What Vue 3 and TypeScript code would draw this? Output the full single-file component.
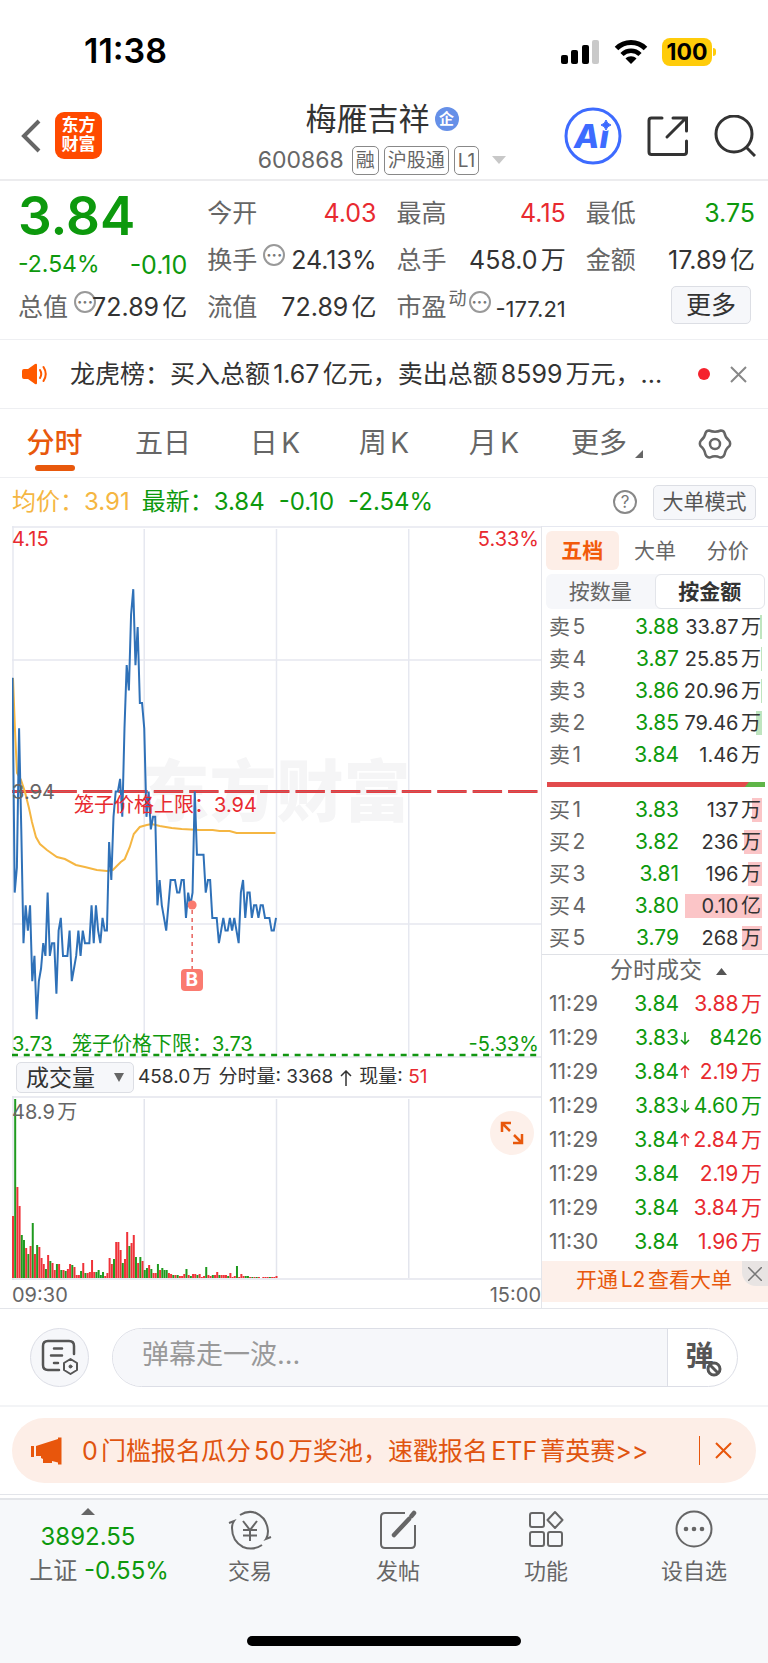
<script setup lang="ts">
import { ref } from 'vue'

interface DepthRow { label: string; price: string; amount: string; bar: number }
interface Trade { time: string; price: string; move: '' | 'up' | 'down'; amount: string; side: 'red' | 'green' }

const periods = ['分时', '五日', '日K', '周K', '月K']
const activePeriod = ref('分时')
const bookTabs = ['五档', '大单', '分价']
const activeBook = ref('五档')
const units = ['按数量', '按金额']
const activeUnit = ref('按金额')
const indicator = ref('成交量')
const message = ref('')

const sells: DepthRow[] = [
  { label: '卖5', price: '3.88', amount: '33.87万', bar: 2 },
  { label: '卖4', price: '3.87', amount: '25.85万', bar: 1 },
  { label: '卖3', price: '3.86', amount: '20.96万', bar: 1 },
  { label: '卖2', price: '3.85', amount: '79.46万', bar: 6 },
  { label: '卖1', price: '3.84', amount: '1.46万', bar: 0 },
]
const buys: DepthRow[] = [
  { label: '买1', price: '3.83', amount: '137万', bar: 10 },
  { label: '买2', price: '3.82', amount: '236万', bar: 18 },
  { label: '买3', price: '3.81', amount: '196万', bar: 14 },
  { label: '买4', price: '3.80', amount: '0.10亿', bar: 77 },
  { label: '买5', price: '3.79', amount: '268万', bar: 20 },
]
const trades: Trade[] = [
  { time: '11:29', price: '3.84', move: '', amount: '3.88万', side: 'red' },
  { time: '11:29', price: '3.83', move: 'down', amount: '8426', side: 'green' },
  { time: '11:29', price: '3.84', move: 'up', amount: '2.19万', side: 'red' },
  { time: '11:29', price: '3.83', move: 'down', amount: '4.60万', side: 'green' },
  { time: '11:29', price: '3.84', move: 'up', amount: '2.84万', side: 'red' },
  { time: '11:29', price: '3.84', move: '', amount: '2.19万', side: 'red' },
  { time: '11:29', price: '3.84', move: '', amount: '3.84万', side: 'red' },
  { time: '11:30', price: '3.84', move: '', amount: '1.96万', side: 'red' },
]

// One price per minute from 09:30 to 11:30, in cents.
const prices: number[] = [
  403, 386, 388, 399, 391, 382, 385, 383, 385, 379, 381, 376, 379, 380, 382, 381, 386, 381, 382, 382,
  378, 383, 384, 381, 381, 381, 383, 379, 380, 381, 383, 381, 383, 382, 382, 382, 385, 382, 385, 383,
  382, 384, 383, 383, 390, 387, 392, 394, 394, 395, 392, 399, 404, 402, 408, 410, 404, 407, 401, 401,
  399, 392, 394, 391, 392, 392, 385, 387, 385, 384, 383, 385, 387, 387, 387, 386, 386, 387, 387, 384,
  386, 385, 386, 394, 389, 389, 389, 389, 386, 387, 387, 384, 384, 384, 382, 383, 384, 383, 383, 384,
  383, 384, 383, 382, 386, 387, 384, 386, 386, 384, 385, 385, 384, 385, 385, 384, 384, 384, 383, 383,
  384,
]
const minuteStep = 264 / 120
const priceLine = prices
  .map((p, i) => `${(i * minuteStep + 0.5).toFixed(1)},${(265.5 - ((p - 394) * 265.5) / 21).toFixed(1)}`)
  .join(' ')
const averageLine =
  '1,152 3,204 5,247 9,254 13,266 17,282 20,296 24,311 28,318 35,324 45,331 53,333 64,339 73,341 85,344 95,345 101,344 109,336 113,333 118,321 122,308 128,301 135,299 140,298 148,300 160,302 170,303 188,304 201,304 208,305 218,305 225,307 264,307'

const volumes: number[] = [
  62, 179, 91, 72, 43, 38, 30, 24, 32, 55, 24, 33, 31, 20, 14, 9, 23, 17, 15, 8,
  14, 14, 8, 8, 7, 9, 14, 13, 11, 3, 3, 7, 15, 5, 5, 6, 18, 6, 6, 8,
  3, 6, 2, 5, 20, 14, 19, 36, 36, 28, 15, 19, 46, 32, 35, 43, 21, 15, 21, 17,
  8, 10, 13, 9, 5, 5, 14, 8, 10, 8, 8, 5, 4, 3, 3, 3, 2, 2, 4, 9,
  3, 2, 4, 4, 3, 4, 1, 2, 11, 3, 2, 3, 3, 6, 3, 3, 3, 3, 2, 5,
  1, 2, 12, 1, 4, 2, 2, 2, 1, 1, 1, 1, 1, 0, 1, 1, 1, 1, 1, 1, 2,
]
const volumeSides =
  'rgrrggrgrgrgrrrgrgrrgrgrgrrgrrrgrgrrrrggggrrrrgrrrgrrgrrgrgrggrgrrgrgggrrgrgrrrgrgrrgrrrgrrgrrgrrrgrrrgrrrggrgrgrrrrrgrrr'
const volumeBars = volumes.map((h, i) => ({
  x: i * minuteStep,
  h,
  rise: volumeSides.charAt(i) !== 'g',
}))
</script>

<template>
  <div class="page">
    <header>
      <div class="status">
        <time>11:38</time>
        <div class="status-icons">
          <svg width="40" height="26" viewBox="0 0 40 26" aria-hidden="true">
            <rect x="1" y="16" width="7" height="9" rx="2" />
            <rect x="11" y="11" width="7" height="14" rx="2" />
            <rect x="22" y="6" width="7" height="19" rx="2" />
            <rect x="32" y="1" width="7" height="24" rx="2" fill="#c9c9c9" />
          </svg>
          <svg width="34" height="26" viewBox="0 0 34 26" fill="none" stroke="#000" stroke-width="5" aria-hidden="true">
            <path d="M2.500 9.500C10.500 1.500 23.500 1.500 31.500 9.500" />
            <path d="M8 15.500C13 10.500 21 10.500 26 15.500" stroke-width="4.500" />
            <path d="M11.500 19.500C14.500 16.500 19.500 16.500 22.500 19.500L17 25Z" fill="#000" stroke="none" />
          </svg>
          <span class="battery">100</span>
        </div>
      </div>
      <div class="title-bar">
        <div class="title-left">
          <button class="plain" aria-label="返回">
            <svg width="22" height="36" viewBox="0 0 22 36" fill="none" stroke="#666" stroke-width="4"><path d="M19 3L4 18L19 33" /></svg>
          </button>
          <a class="logo" href="#">东方<br />财富</a>
        </div>
        <div class="title-mid">
          <h1>梅雁吉祥<span class="ent">企</span></h1>
          <div class="code"><span>600868</span><i>融</i><i>沪股通</i><i>L1</i>
            <svg width="14" height="8" viewBox="0 0 14 8" fill="#c8c8c8"><path d="M0 0H14L7 8Z" /></svg>
          </div>
        </div>
        <div class="title-right">
          <button class="plain" aria-label="Ai">
            <svg width="58" height="58" viewBox="0 0 58 58">
              <circle cx="29" cy="29" r="27" fill="#fff" stroke="#3d6bff" stroke-width="3" />
              <text x="10" y="41" class="ai">Ai</text>
              <circle cx="42" cy="18" r="6" fill="#fff" />
              <path d="M42 13Q43 17 47 18Q43 19 42 23Q41 19 37 18Q41 17 42 13Z" fill="#3d6bff" stroke="#3d6bff" />
            </svg>
          </button>
          <button class="plain" aria-label="分享">
            <svg width="42" height="42" viewBox="0 0 42 42" fill="none" stroke="#333" stroke-width="3" stroke-linecap="round">
              <path d="M15 3H4.500Q2 3 2 5.500V37Q2 39.500 4.500 39.500H37Q39.500 39.500 39.500 37V26M20 22L38.500 3.500M26 3H39.500V16" />
            </svg>
          </button>
          <button class="plain" aria-label="搜索">
            <svg width="42" height="42" viewBox="0 0 42 42" fill="none" stroke="#333" stroke-width="3">
              <circle cx="20" cy="19" r="18" /><path d="M32 32L41 41" />
            </svg>
          </button>
        </div>
      </div>
    </header>

    <section class="quote">
      <strong class="last green">3.84</strong>
      <div class="cell"><label>今开</label><b class="red">4.03</b></div>
      <div class="cell"><label>最高</label><b class="red">4.15</b></div>
      <div class="cell"><label>最低</label><b class="green">3.75</b></div>
      <div class="cell change green"><span>-2.54%</span><b>-0.10</b></div>
      <div class="cell"><label>换手<span class="dots">···</span></label><b>24.13%</b></div>
      <div class="cell"><label>总手</label><b>458.0万</b></div>
      <div class="cell"><label>金额</label><b>17.89亿</b></div>
      <div class="cell"><label>总值<span class="dots">···</span></label><b>72.89亿</b></div>
      <div class="cell"><label>流值</label><b>72.89亿</b></div>
      <div class="cell"><label>市盈<sup>动</sup><span class="dots tight">···</span></label><b class="small">-177.21</b></div>
      <div class="cell end"><button class="box more">更多</button></div>
    </section>

    <section class="notice">
      <svg width="26" height="22" viewBox="0 0 26 22" fill="#ff5a00" aria-hidden="true">
        <path d="M2 6H6L13 1Q15 0 15 2V20Q15 22 13 21L6 16H2Q0 16 0 14V8Q0 6 2 6Z" />
        <path d="M18 7Q20.500 11 18 15M21.500 4Q26 11 21.500 18" fill="none" stroke="#ff5a00" stroke-width="2" stroke-linecap="round" />
      </svg>
      <p>龙虎榜：买入总额1.67亿元，卖出总额8599万元，...</p>
      <span class="dot"></span>
      <button class="plain" aria-label="关闭">
        <svg width="17" height="17" viewBox="0 0 17 17" stroke="#888" stroke-width="2"><path d="M1 1L16 16M16 1L1 16" /></svg>
      </button>
    </section>

    <nav class="periods">
      <button v-for="p in periods" :key="p" class="plain" :class="{ on: p === activePeriod }" @click="activePeriod = p">{{ p }}</button>
      <button class="plain">更多<svg class="corner" width="8" height="8" viewBox="0 0 8 8" fill="#666"><path d="M8 0V8H0Z" /></svg></button>
      <button class="plain" aria-label="设置">
        <svg width="34" height="34" viewBox="0 0 34 34" fill="none" stroke="#666" stroke-width="2.500" stroke-linejoin="round">
          <path d="M11 3.500Q17 6 23 3.500Q25.500 3.500 26.500 6Q27 10 31 13.500Q33 16 31.500 19Q27.500 22 26.500 27.500Q25 31 22 30.500Q17 28 12 30.500Q9 31 7.500 27.500Q6.500 22 2.500 19Q1 16 3 13.500Q7 10 7.500 6Q8.500 3.500 11 3.500Z" />
          <circle cx="17" cy="17" r="5" />
        </svg>
      </button>
    </nav>

    <div class="summary">
      <span class="yellow">均价：3.91</span>
      <span class="green figures"><span>最新：3.84</span><span>-0.10</span><span>-2.54%</span></span>
      <button class="plain help" aria-label="帮助">?</button>
      <button class="box mode">大单模式</button>
    </div>

    <main>
      <div class="charts">
        <div class="price-chart">
          <div class="watermark">东方财富</div>
          <svg class="plot" viewBox="0 0 530 532" preserveAspectRatio="none" fill="none">
            <g stroke="#e6e8f0" stroke-width="1.500">
              <path d="M0 1H530M0 134H530M0 398H530M0 531H530M1 0V532M132.500 3V530M265 3V530M397.500 3V530" />
            </g>
            <path d="M0 265.500H528" stroke="#e83a3f" stroke-width="3" stroke-dasharray="29.500 6" />
            <path d="M0 265.500H528" stroke="#888" stroke-width="1" stroke-dasharray="29.500 6" opacity="0.4" />
            <path d="M0 529H528" stroke="#119611" stroke-width="2.500" stroke-dasharray="6 5.800" />
            <polyline :points="averageLine" stroke="#f5b642" stroke-width="2" />
            <polyline :points="priceLine" stroke="#2f71b8" stroke-width="2" />
            <path d="M180.500 384V443" stroke="#e8625d" stroke-width="1.500" stroke-dasharray="4 4" />
            <circle cx="180.500" cy="379" r="4.500" fill="#fa7b70" />
          </svg>
          <span class="tag red t-max">4.15</span>
          <span class="tag red t-maxp">5.33%</span>
          <span class="tag t-mid">3.94</span>
          <span class="tag red t-upper">笼子价格上限：3.94</span>
          <span class="tag green t-lower">3.73</span>
          <span class="tag green t-floor">笼子价格下限：3.73</span>
          <span class="tag green t-minp">-5.33%</span>
          <span class="buy-mark">B</span>
        </div>
        <div class="volume-head">
          <div class="picker">
            <select v-model="indicator" aria-label="指标"><option>成交量</option></select>
            <svg width="10" height="9" viewBox="0 0 10 9" fill="#666"><path d="M0 0H10L5 9Z" /></svg>
          </div>
          <span>458.0万</span><span>分时量: 3368</span>
          <svg width="12" height="16" viewBox="0 0 12 16" fill="none" stroke="#333" stroke-width="1.500"><path d="M6 16V1M1 6L6 1L11 6" /></svg>
          <span>现量: <em class="red">51</em></span>
        </div>
        <div class="volume-chart">
          <svg class="plot" viewBox="0 0 530 184" preserveAspectRatio="none">
            <path d="M0 1H530M0 183H530M1 0V184M132.500 3V182M265 3V182M397.500 3V182" stroke="#e3e5ed" stroke-width="1.500" fill="none" />
            <rect v-for="b in volumeBars" :key="b.x" :x="b.x" :y="182 - b.h" width="2" :height="b.h" :fill="b.rise ? '#ef3239' : '#1f9a1f'" />
          </svg>
          <span class="tag t-vol">48.9万</span>
          <button class="expand" aria-label="全屏">
            <svg width="24" height="24" viewBox="0 0 24 24" fill="none" stroke="#e8580c" stroke-width="2.500">
              <path d="M2 11V2H11M2 2L10 10M22 13V22H13M22 22L14 14" />
            </svg>
          </button>
        </div>
        <div class="hours"><span>09:30</span><span>15:00</span></div>
      </div>

      <aside>
        <div class="book-tabs">
          <button v-for="t in bookTabs" :key="t" class="plain" :class="{ on: t === activeBook }" @click="activeBook = t">{{ t }}</button>
        </div>
        <div class="unit-tabs">
          <button v-for="u in units" :key="u" class="plain" :class="{ on: u === activeUnit }" @click="activeUnit = u">{{ u }}</button>
        </div>
        <table class="depth sell">
          <tbody>
            <tr v-for="r in sells" :key="r.label">
              <th>{{ r.label }}</th><td class="green">{{ r.price }}</td>
              <td><div class="amount"><i :style="{ width: r.bar + 'px' }"></i><span>{{ r.amount }}</span></div></td>
            </tr>
          </tbody>
        </table>
        <div class="ratio"><svg viewBox="0 0 216 6" preserveAspectRatio="none"><path d="M0 0H216V6H0Z" fill="#5fb548" /><path d="M0 0H200L196 6H0Z" fill="#e24a4c" /></svg></div>
        <table class="depth buy">
          <tbody>
            <tr v-for="r in buys" :key="r.label">
              <th>{{ r.label }}</th><td class="green">{{ r.price }}</td>
              <td><div class="amount"><i :style="{ width: r.bar + 'px' }"></i><span>{{ r.amount }}</span></div></td>
            </tr>
          </tbody>
        </table>
        <button class="plain ticks-head">分时成交<svg width="11" height="7" viewBox="0 0 11 7" fill="#555"><path d="M0 7H11L5.500 0Z" /></svg></button>
        <table class="ticks">
          <tbody>
            <tr v-for="(t, i) in trades" :key="i">
              <th>{{ t.time }}</th>
              <td class="green">{{ t.price }}</td>
              <td class="arrow">
                <svg v-if="t.move" width="10" height="14" viewBox="0 0 10 14" fill="none" stroke-width="1.500" :stroke="t.move === 'up' ? '#e82a30' : '#119611'">
                  <path :d="t.move === 'up' ? 'M5 13V1M1 5L5 1L9 5' : 'M5 1V13M1 9L5 13L9 9'" />
                </svg>
              </td>
              <td :class="t.side">{{ t.amount }}</td>
            </tr>
          </tbody>
        </table>
        <div class="l2">
          <a href="#">开通L2查看大单</a>
          <button class="plain" aria-label="关闭">
            <svg width="14" height="14" viewBox="0 0 14 14" stroke="#777" stroke-width="1.500"><path d="M0 0L14 14M14 0L0 14" /></svg>
          </button>
        </div>
      </aside>
    </main>

    <form class="danmu" @submit.prevent>
      <button type="button" class="round" aria-label="弹幕设置">
        <svg width="38" height="36" viewBox="0 0 38 36" fill="none" stroke="#555" stroke-width="2.500" stroke-linecap="round">
          <path d="M18 31H7Q2 31 2 26V7Q2 2 7 2H28Q33 2 33 7V15M13 9.500H21M10 16.500H21M13 24H17" />
          <path d="M29.500 20L36 24V31L29.500 35L23 31V24Z" fill="#f6f7fa" stroke-linejoin="round" stroke-width="2" />
          <circle cx="29.500" cy="27.500" r="1.500" fill="#555" stroke-width="1" />
        </svg>
      </button>
      <div class="pill">
        <input v-model="message" type="text" placeholder="弹幕走一波..." aria-label="弹幕" />
        <button type="button" class="plain toggle">弹
          <svg width="16" height="16" viewBox="0 0 16 16" fill="#fff" stroke="#555" stroke-width="3"><circle cx="8" cy="8" r="6" /><path d="M4 4L12 12" /></svg>
        </button>
      </div>
    </form>

    <section class="promo-wrap">
      <div class="promo">
        <svg width="32" height="28" viewBox="0 0 32 28" fill="#e8560c" aria-hidden="true">
          <path d="M0 9H3V20H0ZM5 9L27 2V0.500H30.500V27.500H27V25.500L21 24V26H12V22L10 21V19H5Z" />
        </svg>
        <a href="#">0门槛报名瓜分50万奖池，速戳报名ETF菁英赛&gt;&gt;</a>
        <span class="bar"></span>
        <button class="plain" aria-label="关闭">
          <svg width="17" height="17" viewBox="0 0 17 17" stroke="#e8560c" stroke-width="2"><path d="M1 1L16 16M16 1L1 16" /></svg>
        </button>
      </div>
    </section>

    <footer>
      <nav>
        <a href="#" class="index">
          <svg width="14" height="7" viewBox="0 0 14 7" fill="#666"><path d="M0 7H14L7 0Z" /></svg>
          <span class="green">3892.55</span>
          <span class="index-name">上证 <em class="green">-0.55%</em></span>
        </a>
        <a href="#">
          <svg width="44" height="40" viewBox="0 0 44 40" fill="none" stroke="#666" stroke-width="2">
            <path d="M12 5Q20 0 28 3Q39 8 40 21Q40 26 38 29L43 27M34 35Q25 41 15 37Q4 31 4 18Q4 14 6 11L1 13" />
            <path d="M15 11L22 20L29 11M22 20V31M15 20H29M15 25.500H29" />
          </svg>交易
        </a>
        <a href="#">
          <svg width="38" height="40" viewBox="0 0 38 40" fill="none" stroke="#666" stroke-width="2">
            <path d="M26 3H6Q2 3 2 7V34Q2 38 6 38H32Q36 38 36 34V15" />
            <path d="M30 9L15 25M35 3L32.500 6" stroke-width="4.500" stroke-linecap="round" />
          </svg>发帖
        </a>
        <a href="#">
          <svg width="36" height="38" viewBox="0 0 36 38" fill="none" stroke="#666" stroke-width="2">
            <rect x="2" y="3" width="14" height="14" rx="2" /><rect x="2" y="22" width="14" height="14" rx="2" />
            <rect x="20" y="22" width="14" height="14" rx="2" /><path d="M27 2L34.500 10L27 18L19.500 10Z" stroke-linejoin="round" />
          </svg>功能
        </a>
        <a href="#">
          <svg width="38" height="38" viewBox="0 0 38 38" fill="none" stroke="#666" stroke-width="2">
            <circle cx="19" cy="19" r="17.500" /><g fill="#666" stroke="none"><circle cx="11" cy="19" r="2.300" /><circle cx="19" cy="19" r="2.300" /><circle cx="27" cy="19" r="2.300" /></g>
          </svg>设自选
        </a>
      </nav>
      <div class="home"></div>
    </footer>
  </div>
</template>

<style>
body { background: #fff; }
</style>

<style scoped>
.page {
  font-family: Inter, "Noto Sans CJK SC", sans-serif;
  line-height: 1.2;
  color: #333;
  background: #fff;
  text-autospace: normal;
}
.page *, .page *::before { box-sizing: border-box; }
button, input, select { font: inherit; color: inherit; }
button { cursor: pointer; }
a { color: inherit; text-decoration: none; }
svg { display: block; flex: none; }
em, i { font-style: normal; }
.plain { border: 0; background: none; padding: 0; }
.green { color: #0d990d; }
.red { color: #e82a30; }
.yellow { color: #f5b642; }
.box { border: 1px solid #dcdee4; border-radius: 5px; background: #f6f7fa; padding: 0; }

.status { height: 92px; padding: 11px 56px 0 84px; display: flex; align-items: center; justify-content: space-between; }
.status time { font-size: 34px; font-weight: 600; color: #000; }
.status-icons { display: flex; align-items: center; gap: 14px; }
.battery {
  position: relative; width: 50px; height: 28px; border-radius: 8px; background: #ffcc0a;
  color: #000; font-size: 23px; font-weight: 700; line-height: 28px; text-align: center;
}
.battery::after { content: ""; position: absolute; right: -4px; top: 10px; width: 3px; height: 8px; border-radius: 0 4px 4px 0; background: #ffcc0a; }

.title-bar { height: 89px; padding: 0 12px 0 20px; display: grid; grid-template-columns: 1fr auto 1fr; align-items: center; border-bottom: 2px solid #ececee; }
.title-left { display: flex; align-items: center; gap: 13px; }
.logo {
  width: 47px; height: 47px; border-radius: 9px; background: #ff4a00; color: #fff;
  font-size: 17px; font-weight: 700; line-height: 19px; text-align: center; padding-top: 4px;
}
.title-mid { padding: 4px 12px 0 0; }
h1 { margin: 0; font-size: 31px; font-weight: 400; line-height: 38px; display: flex; align-items: center; justify-content: center; gap: 5px; }
.ent { width: 24px; height: 24px; border-radius: 50%; background: #6690e8; color: #fff; font-size: 15px; font-weight: 700; line-height: 23px; text-align: center; }
.code { display: flex; align-items: center; gap: 5px; margin-top: 7px; color: #666; font-size: 23px; line-height: 30px; }
.code span { margin-right: 3px; }
.code i { border: 1px solid #888; border-radius: 5px; height: 29px; padding: 0 3px; font-size: 19px; line-height: 27px; }
.code svg { margin-left: 8px; }
.title-right { display: flex; align-items: center; justify-content: flex-end; gap: 25px; }
.ai { font-family: Inter, sans-serif; font-size: 33px; font-weight: 800; font-style: italic; fill: #3d6bff; }

.quote {
  display: grid; grid-template-columns: repeat(4, minmax(0, 1fr)); grid-template-rows: repeat(3, 47px); column-gap: 20px;
  padding: 8px 13px 9px 18px; border-bottom: 1px solid #eeeff2;
}
.last { font-size: 53px; font-weight: 600; line-height: 54px; }
.cell { display: flex; align-items: center; justify-content: space-between; font-size: 25px; white-space: nowrap; }
.cell label { color: #666; display: flex; align-items: center; min-width: 0; flex: 0 1 auto; }
.cell b { font-weight: 400; font-size: 25px; flex: none; }
.cell b.small { font-size: 22px; padding-top: 5px; }
.cell sup { font-size: 18px; align-self: flex-start; line-height: 16px; margin-left: 2px; }
.change { font-size: 23px; padding-top: 10px; }
.end { justify-content: flex-end; padding-right: 4px; }
.more { width: 80px; height: 38px; font-size: 25px; margin-bottom: 4px; }
.dots {
  flex: none; width: 22px; height: 22px; border: 2px solid #999; border-radius: 50%; color: #777;
  font-size: 16px; font-weight: 700; line-height: 18px; margin: 0 0 10px 6px;
  display: flex; justify-content: center;
}
.dots.tight { margin-left: 2px; }

.notice { display: flex; align-items: center; height: 69px; padding: 0 21px 0 22px; border-bottom: 1px solid #eeeff2; }
.notice p { flex: 1; margin: 0 0 0 22px; font-size: 25px; white-space: nowrap; }
.dot { width: 12px; height: 12px; border-radius: 50%; background: #f5222d; margin-right: 20px; }

.periods { display: grid; grid-template-columns: 109fr 108fr 116fr 102fr 118fr 108fr 107fr; height: 69px; border-bottom: 1px solid #eeeff2; font-size: 28px; color: #666; }
.periods button { display: flex; align-items: center; justify-content: center; position: relative; padding-top: 1px; white-space: nowrap; }
.corner { margin: 20px 0 0 8px; }
.periods .on { color: #e8580c; font-weight: 500; }
.periods .on::before { content: ""; position: absolute; left: 50%; bottom: 6px; width: 40px; height: 6px; margin-left: -20px; border-radius: 3px; background: #e8580c; }

.summary { height: 48px; display: flex; align-items: center; padding: 0 12px; font-size: 24px; white-space: nowrap; }
.figures { flex: 1; display: flex; gap: 14px; margin-left: 12px; }
.help { width: 24px; height: 24px; border: 2px solid #888; border-radius: 50%; font-size: 17px; line-height: 19px; color: #777; }
.mode { width: 103px; height: 35px; margin-left: 16px; font-size: 21px; color: #555; }

main { display: grid; grid-template-columns: 1fr 227px; padding-left: 12px; border-bottom: 1px solid #e3e5ea; }
.charts { min-width: 0; }
.price-chart { position: relative; height: 532px; }
.plot { position: absolute; inset: 0; width: 100%; height: 100%; }
.watermark { position: absolute; inset: 0; display: flex; align-items: center; justify-content: center; font-size: 67px; font-weight: 900; color: #f5f5f6; }
.tag { position: absolute; font-size: 20px; line-height: 24px; white-space: nowrap; }
.t-max { left: 0; top: 1px; }
.t-maxp { right: 2px; top: 1px; }
.t-mid { left: 0; top: 254px; color: #666; }
.t-upper { left: 62px; top: 267px; }
.t-lower { left: 0; bottom: 2px; }
.t-floor { left: 60px; bottom: 2px; }
.t-minp { right: 2px; bottom: 2px; }
.t-vol { left: 0; top: 4px; color: #666; }
.buy-mark { position: absolute; left: 34%; top: 443px; width: 22px; height: 22px; margin-left: -11px; border-radius: 4px; background: #fa7b70; color: #fff; font-size: 19px; font-weight: 700; line-height: 22px; text-align: center; }
.volume-head { height: 38px; display: flex; align-items: center; gap: 7px; padding: 1px 0 0 4px; font-size: 19px; white-space: nowrap; }
.picker { position: relative; margin-right: -3px; }
.picker select { appearance: none; width: 118px; height: 31px; border: 1px solid #dcdee4; border-radius: 5px; background: #f6f7fa; padding: 0 9px; font-size: 23px; line-height: 28px; }
.picker svg { position: absolute; right: 10px; top: 11px; pointer-events: none; }
.volume-chart { position: relative; height: 184px; }
.expand { position: absolute; right: 7px; top: 15px; width: 44px; height: 44px; border: 0; border-radius: 50%; background: #fdf0ea; display: grid; place-items: center; padding: 0; }
.hours { display: flex; justify-content: space-between; height: 28px; font-size: 20px; line-height: 31px; color: #666; }

aside { border-left: 1px solid #e3e5ea; min-width: 0; }
.book-tabs { display: grid; grid-template-columns: 1fr 1fr 1fr; border-top: 1px solid #e6e8f0; padding: 4px 4px 0; font-size: 21px; color: #666; }
.book-tabs button { height: 39px; border-radius: 6px; }
.book-tabs .on { background: #fdeee7; color: #f25a0a; font-weight: 700; }
.unit-tabs { display: flex; margin: 4px 3px 0 4px; background: #f6f7fa; border-radius: 6px; font-size: 21px; color: #666; }
.unit-tabs button { flex: 1; height: 35px; }
.unit-tabs .on { background: #fff; border: 1px solid #e3e5ea; border-radius: 6px; color: #333; font-weight: 700; }
table { border-collapse: collapse; table-layout: fixed; width: 213px; margin-left: 7px; white-space: nowrap; }
th, td { padding: 0; font-weight: 400; text-align: right; }
th { text-align: left; color: #666; width: 50px; }
.depth { font-size: 21px; }
.depth tr { height: 32px; }
.depth td:nth-child(2) { width: 80px; }
.sell { margin-top: 2px; }
.amount { position: relative; height: 24px; line-height: 24px; padding-right: 1px; font-size: 20px; }
.amount i { position: absolute; right: 0; top: 0; height: 24px; background: #bfe5bf; }
.buy .amount i { background: #fbc5c7; }
.amount span { position: relative; }
.ratio { margin: 11px 3px 7px 5px; height: 5px; }
.ratio svg { width: 100%; height: 100%; }
.ticks-head { display: flex; align-items: center; justify-content: center; gap: 14px; width: 100%; height: 33px; padding-left: 27px; border-top: 1px solid #dfe1e6; font-size: 23px; color: #666; }
.ticks { font-size: 21px; }
.ticks tr { height: 34px; }
.ticks th { width: 57px; }
.ticks td:nth-child(2) { width: 73px; }
.ticks .arrow { width: 11px; padding-left: 1px; }
.l2 { position: relative; height: 41px; margin-top: 2px; background: #fdf0ea; color: #e8580c; font-size: 21px; line-height: 38px; text-align: center; padding-right: 2px; }
.l2 a { display: block; }
.l2 button { position: absolute; right: 0; top: 0; width: 26px; height: 25px; background: #e8e4e3; border-radius: 0 0 0 14px; display: grid; place-items: center; }

.danmu { display: flex; align-items: center; gap: 23px; height: 98px; padding: 0 30px; border-bottom: 2px solid #f3f4f6; }
.round { width: 59px; height: 59px; border-radius: 50%; border: 1px solid #dcdee6; background: #f6f7fa; display: grid; place-items: center; padding: 0; flex: none; }
.pill { flex: 1; display: flex; height: 59px; border: 1px solid #dcdee6; border-radius: 30px; overflow: hidden; }
.pill input { flex: 1; min-width: 0; border: 0; outline: 0; background: #f6f7fa; padding: 0 29px 3px; font-size: 27px; }
.pill input::placeholder { color: #999; opacity: 1; }
.toggle { position: relative; width: 70px; border-left: 1px solid #dcdee6; font-size: 28px; font-weight: 700; color: #555; padding: 0 6px 0 0; }
.toggle svg { position: absolute; left: 38px; top: 32px; }

.promo-wrap { padding: 11px 12px; border-bottom: 1px solid #e3e5ea; }
.promo { display: flex; align-items: center; height: 65px; border-radius: 33px; background: #fdeee7; padding: 0 24px 0 19px; color: #e0540f; font-size: 25px; white-space: nowrap; }
.promo a { flex: 1; margin-left: 19px; }
.bar { width: 1px; height: 29px; background: #e8560c; margin-right: 15px; }

footer { margin-top: 3px; border-top: 2px solid #e3e5e9; background: #f6f8fa; height: 165px; display: flex; flex-direction: column; justify-content: space-between; align-items: center; }
footer nav { width: 100%; display: grid; grid-template-columns: 176px repeat(4, 1fr); height: 88px; padding-top: 8px; }
footer nav a { display: flex; flex-direction: column; align-items: center; justify-content: space-between; font-size: 22px; line-height: 34px; color: #666; }
footer nav a > svg { margin-top: 2px; }
footer nav .index { font-size: 24px; justify-content: flex-end; }
footer nav .index > svg { margin: 0 0 5px; }
.index-name { padding-left: 22px; white-space: nowrap; }
.home { width: 274px; height: 10px; border-radius: 5px; background: #000; margin-bottom: 17px; }
</style>
